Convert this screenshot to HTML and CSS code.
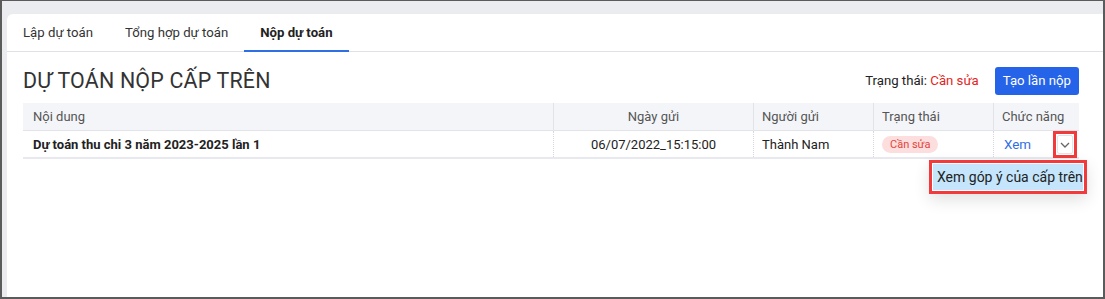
FILE: index.html
```html
<!DOCTYPE html>
<html lang="vi">
<head>
    <meta charset="UTF-8">
    <title>Nộp dự toán</title>
    <link rel="stylesheet" href="styles.css">
</head>
<body>
    <div class="frame">
        <div class="card">
            <div class="tabs">
                <div class="tab">Lập dự toán</div>
                <div class="tab">Tổng hợp dự toán</div>
                <div class="tab active">Nộp dự toán</div>
            </div>

            <div class="content">
                <div class="title-row">
                    <h1 class="title">DỰ TOÁN NỘP CẤP TRÊN</h1>
                    <div class="actions">
                        <span class="status">Trạng thái: <span class="status-red">Cần sửa</span></span>
                        <button class="btn-primary">Tạo lần nộp</button>
                    </div>
                </div>

                <div class="table">
                    <div class="row head">
                        <div class="cell c-name">Nội dung</div>
                        <div class="cell c-date">Ngày gửi</div>
                        <div class="cell c-user">Người gửi</div>
                        <div class="cell c-status">Trạng thái</div>
                        <div class="cell c-func">Chức năng</div>
                    </div>
                    <div class="row body">
                        <div class="cell c-name bold">Dự toán thu chi 3 năm 2023-2025 lần 1</div>
                        <div class="cell c-date">06/07/2022_15:15:00</div>
                        <div class="cell c-user">Thành Nam</div>
                        <div class="cell c-status"><span class="badge">Cần sửa</span></div>
                        <div class="cell c-func">
                            <a class="link">Xem</a>
                            <span class="more">
                                <span class="more-btn">
                                    <span class="chevron">
                                        <svg width="10" height="6" viewBox="0 0 10 6"><path d="M1 1l4 4 4-4" fill="none" stroke="#666" stroke-width="1.3"/></svg>
                                    </span>
                                </span>
                                <span class="menu">
                                    <span class="menu-item">Xem góp ý của cấp trên</span>
                                </span>
                            </span>
                        </div>
                    </div>
                </div>
            </div>
        </div>
    </div>
</body>
</html>
```

FILE: styles.css
```css
* {
    margin: 0;
    padding: 0;
    box-sizing: border-box;
}

body {
    font-family: Roboto, "Noto Sans", sans-serif;
    background: #ebecf0;
    color: #222;
}

.frame {
    width: 1105px;
    height: 299px;
    border: 2px solid #5b5b5b;
    border-top-width: 1px;
    padding: 13px 0 0 5px;
    background: #ebecf0;
    display: flex;
}

.card {
    flex: 1;
    background: #fff;
    border-top-left-radius: 6px;
    display: flex;
    flex-direction: column;
}

.tabs {
    display: flex;
    border-bottom: 1px solid #dfe1e8;
    height: 38px;
}

.tab {
    padding: 0 16px;
    font-size: 13.2px;
    color: #333;
    display: flex;
    align-items: center;
    border-bottom: 2px solid transparent;
    margin-bottom: -1px;
}

.tab.active {
    font-weight: 700;
    color: #222;
    border-bottom-color: #2f6fe4;
}

.content {
    padding: 0 24px 0 16px;
}

.title-row {
    display: flex;
    align-items: center;
    justify-content: space-between;
    height: 51px;
    padding-top: 6px;
}

.title {
    font-size: 21.4px;
    font-weight: 400;
    color: #333;
    letter-spacing: 0.2px;
}

.actions {
    display: flex;
    align-items: center;
    gap: 16px;
}

.status {
    font-size: 13.2px;
    color: #222;
}

.status-red {
    color: #e3241b;
}

.btn-primary {
    font-family: inherit;
    font-size: 13.2px;
    color: #fff;
    background: #2563e8;
    border: none;
    border-radius: 3px;
    height: 28px;
    padding: 0 8px;
    white-space: nowrap;
}

.row {
    display: flex;
    height: 28px;
}

.row.head {
    background: #f4f5f9;
    border-bottom: 1px solid #e2e4ea;
    color: #555;
}

.row.body {
    border-bottom: 2px solid #e8e9ee;
}

.cell {
    font-size: 13px;
    display: flex;
    align-items: center;
    padding: 0 8px;
}

.head .cell + .cell {
    border-left: 1px solid #e2e4ea;
}

.body .cell + .cell {
    border-left: 1px dotted #d6d8de;
}

.c-name { width: 530px; padding-left: 10px; }
.c-date { width: 200px; justify-content: center; }
.c-user { width: 120px; }
.c-status { width: 120px; }
.c-func { flex: 1; justify-content: space-between; padding-right: 2px; }

.bold {
    font-weight: 700;
    color: #222;
}

.badge {
    background: #fddede;
    color: #e2453c;
    font-size: 11px;
    border-radius: 9px;
    padding: 2px 8px;
}

.link {
    color: #2f6fe4;
    font-size: 13.4px;
    margin-left: 2px;
}

.more {
    position: relative;
    display: flex;
}

.more-btn {
    width: 24px;
    height: 27px;
    border: 3px solid #f23a3c;
    display: flex;
    align-items: center;
    justify-content: center;
    background: #fff;
    margin-top: 1px;
}

.chevron {
    width: 16px;
    height: 19px;
    border: 1px solid #e3e4e8;
    border-radius: 2px;
    display: flex;
    align-items: center;
    justify-content: center;
}

.menu {
    position: absolute;
    top: 30px;
    right: -10px;
    width: 158px;
    height: 34px;
    border: 3px solid #f23a3c;
    background: #fff;
    padding: 1px;
    box-shadow: 0 6px 16px rgba(0,0,0,0.12);
}

.menu-item {
    display: flex;
    align-items: center;
    height: 100%;
    background: #c4e5fc;
    font-size: 14px;
    color: #222;
    padding-left: 4px;
    white-space: nowrap;
    overflow: hidden;
}
```
